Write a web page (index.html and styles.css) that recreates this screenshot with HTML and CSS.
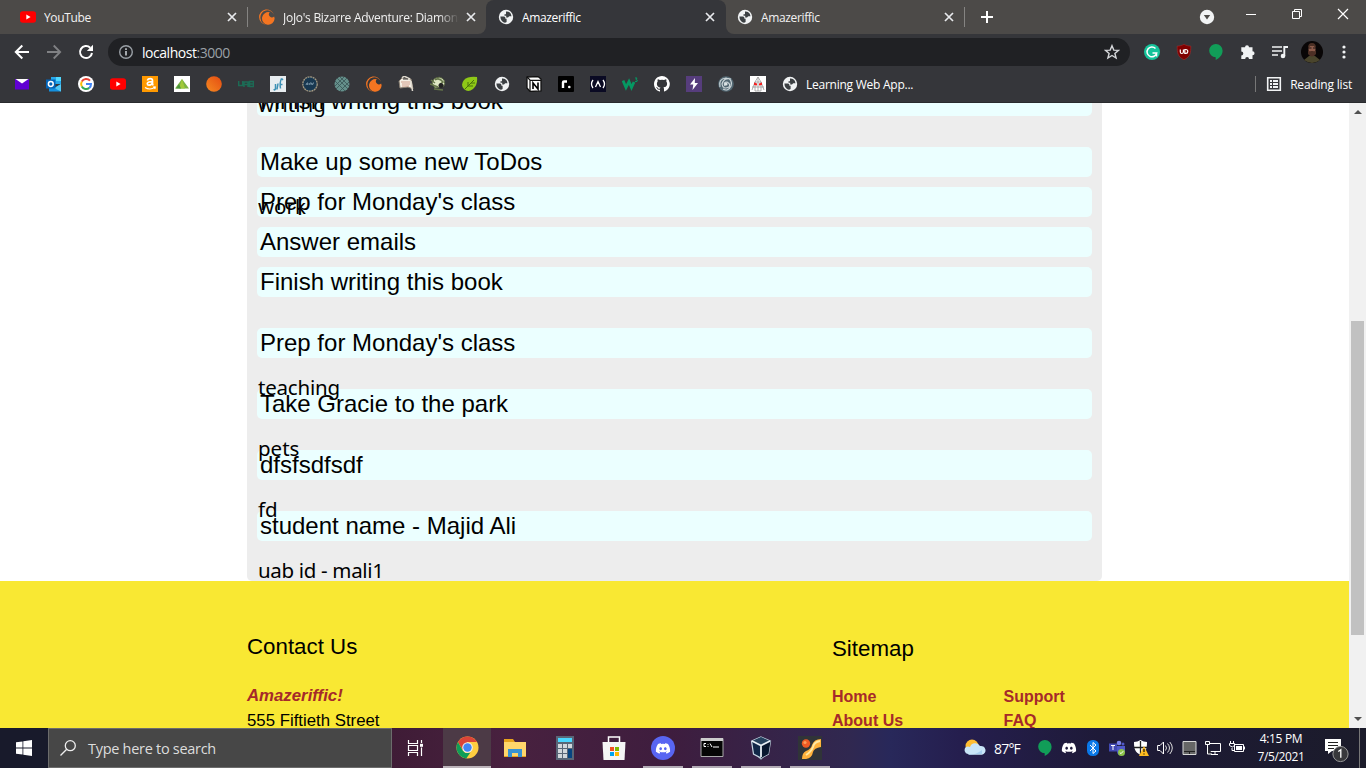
FILE: index.html
```
<!DOCTYPE html>
<html lang="en">
<head>
<meta charset="utf-8">
<title>Amazeriffic</title>
<link rel="stylesheet" href="styles.css">
</head>
<body>
<svg class="defs" width="0" height="0">
  <symbol id="globe" viewBox="0 0 16 16"><circle cx="8" cy="8" r="7.200" fill="#f1f3f4"/><path d="M2.400 7.600H6q1.400 0 1.400 1.500v.7h1.200v3.300q-2.300 1.500-4.700-1.100-1.600-1.800-1.500-4.400zM8 2.500q3-.4 4.800 2.300l.7 2.400h-2.300L10 8.500H8.200V6.700H6.500V5.200H8z" fill="#3c4043"/></symbol>
  <symbol id="close" viewBox="0 0 16 16"><path d="M4 4l8 8M12 4l-8 8" stroke="#e8eaed" stroke-width="1.7"/></symbol>
  <symbol id="youtube" viewBox="0 0 16 16"><rect y="2.300" width="16" height="11.500" rx="2.800" fill="#f00"/><path d="M6.300 5.600v4.900L10.600 8z" fill="#fff"/></symbol>
  <symbol id="crunchy" viewBox="0 0 16 16"><path d="M1.500 9.500A7 7 0 0 1 15 6 7.600 7.600 0 1 0 7 15.600 7 7 0 0 1 1.500 9.500z" fill="#f47521"/><path d="M15.600 9.800A6.300 6.300 0 1 1 10.800 3.300a2.900 2.900 0 1 0 4.300 4.100 6 6 0 0 1 .5 2.400z" fill="#f47521"/></symbol>
  <symbol id="bubble" viewBox="0 0 16 16"><path d="M8 0a6.600 6.600 0 0 0-.3 13.300V16c3.500-1.700 6.900-5 6.900-9.300A6.700 6.700 0 0 0 8 0z" fill="#119d58"/></symbol>
  <symbol id="discord" viewBox="0 0 24 24"><path d="M19.500 5.300A17 17 0 0 0 15.300 4l-.6 1.200a16 16 0 0 0-5.400 0L8.700 4a17 17 0 0 0-4.200 1.300C1.800 9.300 1 13.200 1.400 17a17 17 0 0 0 5.200 2.700l1.200-2-1.900-.9.500-.4c3.600 1.700 7.600 1.700 11.200 0l.5.400-1.900.9 1.200 2a17 17 0 0 0 5.200-2.700c.5-4.400-.8-8.200-3.100-11.700zM8.500 14.500c-1.100 0-2-1-2-2.200s.9-2.200 2-2.200 2 1 2 2.200-.9 2.200-2 2.200zm7 0c-1.100 0-2-1-2-2.200s.9-2.200 2-2.200 2 1 2 2.200-.9 2.200-2 2.200z" fill="#fff"/></symbol>
</svg>
<div class="screen">
<header class="browser">
  <div class="tabs">
    <div class="tab"><svg class="i16"><use href="#youtube"/></svg><span class="tab-title">YouTube</span><svg class="i16"><use href="#close"/></svg></div>
    <div class="tab tab-2"><svg class="i16"><use href="#crunchy"/></svg><span class="tab-title fade">JoJo's Bizarre Adventure: Diamond is</span><svg class="i16"><use href="#close"/></svg></div>
    <div class="tab active"><svg class="i16"><use href="#globe"/></svg><span class="tab-title">Amazeriffic</span><svg class="i16"><use href="#close"/></svg></div>
    <div class="tab tab-4"><svg class="i16"><use href="#globe"/></svg><span class="tab-title">Amazeriffic</span><svg class="i16"><use href="#close"/></svg></div>
    <svg class="plus" viewBox="0 0 16 16"><path d="M8 2v12M2 8h12" stroke="#fff" stroke-width="2"/></svg>
    <div class="window-controls">
      <svg class="i16" viewBox="0 0 16 16"><circle cx="8" cy="8" r="7.200" fill="#f1f3f4"/><path d="M4.800 6h6.400L8 10.500z" fill="#4c4a48"/></svg>
      <svg class="i16 up" viewBox="0 0 16 16"><path d="M3 8.500h10" stroke="#fff"/></svg>
      <svg class="i16 up" viewBox="0 0 16 16"><path d="M3.500 5.500h7v7h-7zM5.500 5V3.500h7v7H11" fill="none" stroke="#fff"/></svg>
      <svg class="i16 up" viewBox="0 0 16 16"><path d="M3 3l10 10M13 3L3 13" stroke="#fff" stroke-width="1.200"/></svg>
    </div>
  </div>
  <div class="toolbar">
    <svg class="nav" viewBox="0 0 16 16"><path d="M15 8H2M8.300 1.500L1.800 8l6.500 6.500" fill="none" stroke="#fff" stroke-width="2"/></svg>
    <svg class="nav" viewBox="0 0 16 16"><path d="M1 8h13M7.700 1.500L14.200 8l-6.500 6.500" fill="none" stroke="#808184" stroke-width="1.800"/></svg>
    <svg class="nav" viewBox="0 0 16 16"><path d="M14 9a6 6 0 1 1-1.800-5.300" fill="none" stroke="#fff" stroke-width="2"/><path d="M15 .7V7H8.800z" fill="#fff"/></svg>
    <div class="omnibox">
      <svg class="i16" viewBox="0 0 16 16"><circle cx="8" cy="8" r="6.300" fill="none" stroke="#9aa0a6" stroke-width="1.400"/><path d="M8 7v4.500M8 4.200v1.700" stroke="#bdc1c6" stroke-width="1.700"/></svg>
      <span class="url">localhost<i>:3000</i></span>
      <svg class="i16 star" viewBox="0 0 16 16"><path d="M8 1.700l1.800 4.400 4.700.3-3.600 3 1.200 4.600L8 11.500 3.900 14l1.200-4.600-3.600-3 4.700-.3z" fill="none" stroke="#d5d7da" stroke-width="1.400"/></svg>
    </div>
    <div class="extensions">
      <svg class="i16" viewBox="0 0 16 16"><circle cx="8" cy="8" r="8" fill="#15c39a"/><path d="M11.500 4.500A4.900 4.900 0 1 0 12.700 9H8.500M12.500 9v3.500" fill="none" stroke="#fff" stroke-width="1.500"/></svg>
      <svg class="i16" viewBox="0 0 16 16"><path d="M8 .3c2 1.200 4.500 1.800 6.800 1.800 0 7-.4 10.500-6.800 13.700C1.600 12.600 1.200 9 1.200 2.100 3.500 2.100 6 1.500 8 .3z" fill="#800000" stroke="#a33" stroke-width=".5"/><path d="M4.300 5.500V8q0 1.500 1.500 1.500T7.400 8V5.500M8.800 5.500v3.900h1q2-.1 2-2t-2-1.900z" fill="none" stroke="#fff" stroke-width="1.200"/></svg>
      <svg class="i16"><use href="#bubble"/></svg>
      <svg class="i16" viewBox="0 0 16 16"><path d="M5 3.300a2 2 0 0 1 4 0h3.500v3.900a2 2 0 0 1 0 4.100V15H9a1.900 1.900 0 0 0-3.800 0H1.300v-3.500a2 2 0 0 0 0-4V3.300z" fill="#f1f3f4"/></svg>
      <svg class="i16" viewBox="0 0 16 16"><path d="M0 3h10M0 7h10M0 11h6" stroke="#f1f3f4" stroke-width="1.600"/><path d="M12.300 12V3H16" fill="none" stroke="#f1f3f4" stroke-width="1.900"/><circle cx="11" cy="12" r="2.300" fill="#f1f3f4"/></svg>
      <svg class="avatar" viewBox="0 0 22 22"><circle cx="11" cy="11" r="11" fill="#090606"/><path d="M3 19l5-4h6l5 4q-8 6-16 0z" fill="#4a452c"/><ellipse cx="11" cy="8.500" rx="3.500" ry="5" fill="#8d5c4b"/><path d="M7 7q0-5 4-5t4 5l-2-2H9z" fill="#4b3025"/><path d="M7 9q1 2 3 1h2q2 1 3-1v4q-4 5-8 0z" fill="#4d2f25"/><path d="M8 7h2.500M12 7h2" stroke="#251715"/></svg>
      <svg class="i16" viewBox="0 0 16 16"><g fill="#f1f3f4"><circle cx="8" cy="3" r="1.600"/><circle cx="8" cy="8" r="1.600"/><circle cx="8" cy="13" r="1.600"/></g></svg>
    </div>
  </div>
  <div class="bookmarks">
    <svg class="i16" viewBox="0 0 16 16"><path d="M1 3h14v10.500H1z" fill="#6001d2"/><path d="M1.500 3h13L8 7.500z" fill="#fff"/></svg>
    <svg class="i16" viewBox="0 0 16 16"><path d="M5 1h10v7H5z" fill="#28a8ea"/><path d="M10 1h5v4h-5z" fill="#50d9ff"/><path d="M3 8l6 4 6-4v7.500H3z" fill="#1490df"/><path d="M15 8v7.500L8 12z" fill="#50c8f5"/><path d="M0 3.500h9.500v9H0z" fill="#0364b8"/><circle cx="4.800" cy="8" r="2.400" fill="none" stroke="#fff" stroke-width="1.500"/></svg>
    <svg class="i16" viewBox="0 0 16 16"><circle cx="8" cy="8" r="8" fill="#fff"/><g fill="none" stroke-width="2"><path d="M12 4.700A5 5 0 0 0 3.800 5.500" stroke="#ea4335"/><path d="M3.800 5.500a5 5 0 0 0 0 5" stroke="#fbbc05"/><path d="M3.800 10.500a5 5 0 0 0 7.500 1.400" stroke="#34a853"/><path d="M11.300 11.900A5 5 0 0 0 13 8H8" stroke="#4285f4"/></g></svg>
    <svg class="i16"><use href="#youtube"/></svg>
    <svg class="i16" viewBox="0 0 16 16"><path d="M0 0h16v16H0z" fill="#f90"/><path d="M5.300 4.500Q6 2.700 8.200 2.700q2.300 0 2.300 2v3q0 1 .9 1.500M10.500 5.600q-5.200 0-5.200 2.100 0 1.500 1.700 1.500 3.500 0 3.500-3.600" fill="none" stroke="#fff" stroke-width="1.700"/><path d="M3 11.500q5 3 10-.2M11.300 10.900l2 .1-.4 2" fill="none" stroke="#fff" stroke-width="1.100"/></svg>
    <svg class="i16" viewBox="0 0 16 16"><path d="M0 0h16v16H0z" fill="#fff"/><path d="M8 3l7 9.500H1z" fill="#7cb342"/><path d="M8 3l3 9.500H5z" fill="#a2c93a"/><path d="M5 8l2 4.500H2z" fill="#4c963c"/></svg>
    <svg class="i16" viewBox="0 0 16 16"><linearGradient id="orange" x1="0" y1="1" x2="1" y2="0"><stop stop-color="#f58a20"/><stop offset="1" stop-color="#e44b12"/></linearGradient><circle cx="8" cy="8" r="7.800" fill="url(#orange)"/></svg>
    <svg class="i16" viewBox="0 0 16 16"><path d="M.7 5v4.500h4V5M6 11V6h4v5M6 8.500h4M11.500 5.500v5h4V8h-4 4V5.500z" fill="none" stroke="#1c6b55" stroke-width="1.500"/></svg>
    <svg class="i16" viewBox="0 0 16 16"><path d="M0 0h16v16H0z" fill="#e8edf0"/><path d="M5.500 8v5q-1 2-1.500 0M8 7.500l-1 6M11.500 2.500q-2 4-1 10M11.500 2.500L13 4M10 8.500h2.500" fill="none" stroke="#3d91b5" stroke-width="1.500"/></svg>
    <svg class="i16" viewBox="0 0 16 16"><circle cx="8" cy="8" r="7.200" fill="#183851" stroke="#a59b84" stroke-width="1.300" stroke-dasharray="2 .6"/><path d="M4 9l1-2h1L5.500 9M7 9l1-2h1.500L9 9M10.500 9l.5-2h1" fill="none" stroke="#7895a8"/></svg>
    <svg class="i16" viewBox="0 0 16 16"><circle cx="8" cy="8" r="7.500" fill="#65908b"/><path d="M1 5l10 10M3 2l11 11M6 1l9 9M1 10L10 1M2 13L13 2M6 15l9-9" stroke="#395456" stroke-width=".8"/></svg>
    <svg class="i16"><use href="#crunchy"/></svg>
    <svg class="i16" viewBox="0 0 16 16"><path d="M1 5l3-3 9 1 2 10-5-2-8 1z" fill="#f4eee4" stroke="#897f72"/><path d="M4 2l2-2 6 3M13 5l1.500 10" fill="none" stroke="#ddd8cd" stroke-width="1.500"/><path d="M3 6h9M4 8h8M4 10h7" stroke="#c88a76" stroke-width=".8"/><path d="M5 3h5" stroke="#333"/></svg>
    <svg class="i16" viewBox="0 0 16 16"><path d="M4 3q6-4 10 1 2 4-1 7l-8 1-3-5z" fill="#dfe8c4" stroke="#56643f"/><path d="M5 4q4-3 8 2l-3 2M0 8l8 3M4 13l9 1M1 4l4 3" fill="none" stroke="#66774a" stroke-width="1.500"/><circle cx="11" cy="9.500" r="2.500" fill="#222"/></svg>
    <svg class="i16" viewBox="0 0 16 16"><path d="M2 4Q6 0 15 1q1 8-4 12-5 4-9 0-4-4 0-9z" fill="#8fc817"/><path d="M3 13L12 4M6 10V6M9 7h4M6 10h5" stroke="#48720a" fill="none"/></svg>
    <svg class="i16"><use href="#globe"/></svg>
    <svg class="i16" viewBox="0 0 16 16"><path d="M1 1l11-.5L15 3v12l-11 .5L1 12z" fill="#fff" stroke="#111" stroke-width="1.300"/><path d="M4 4.300h11M4 4v11M1 1l3 3" stroke="#111" stroke-width="1.200"/><path d="M7 13V7l5 6V6.500" fill="none" stroke="#000" stroke-width="1.600"/></svg>
    <svg class="i16" viewBox="0 0 16 16"><rect width="16" height="16" rx="1" fill="#000"/><path d="M5 12V6.500q0-1 1-1h3" fill="none" stroke="#fff" stroke-width="2.400"/><circle cx="11.300" cy="11" r="1.300" fill="#fff"/></svg>
    <svg class="i16" viewBox="0 0 16 16"><path d="M0 0h16v16H0z" fill="#0a0a23"/><path d="M3 4q-3 4 0 8M13 4q3 4 0 8M5.500 11L8 5.500l2.500 5.500" fill="none" stroke="#fff" stroke-width="1.300"/></svg>
    <svg class="i16" viewBox="0 0 16 16"><path d="M1 4.500l3 7 3-6 2.500 6L12 6" fill="none" stroke="#059862" stroke-width="2.800"/><path d="M13 2h2l-1 1.500q2 0 1 2h-2" fill="none" stroke="#059862"/></svg>
    <svg class="i16" viewBox="0 0 16 16"><path d="M8 0C3.600 0 0 3.600 0 8c0 3.500 2.300 6.500 5.500 7.600.4.100.5-.2.500-.4v-1.500c-2.200.5-2.700-.9-2.700-.9-.4-.9-.9-1.200-.9-1.200-.7-.5.100-.5.100-.5.800.1 1.200.8 1.200.8.700 1.200 1.900.9 2.300.7.100-.5.300-.9.500-1.100-1.800-.2-3.600-.9-3.600-4 0-.9.300-1.600.8-2.100-.1-.2-.4-1 .1-2.100 0 0 .7-.2 2.200.8a7.700 7.700 0 0 1 4 0c1.500-1 2.200-.8 2.200-.8.400 1.100.2 1.900.1 2.100.5.600.8 1.300.8 2.100 0 3.100-1.900 3.700-3.700 3.900.3.300.6.800.6 1.500v2.200c0 .2.100.5.600.4A8 8 0 0 0 8 0z" fill="#fff"/></svg>
    <svg class="i16" viewBox="0 0 16 16"><path d="M0 0h16v16H0z" fill="#563d7c"/><path d="M9 2L4 8.500h3.300L6.500 14l5.500-7H8.800z" fill="#fff"/></svg>
    <svg class="i16" viewBox="0 0 16 16"><circle cx="8" cy="8" r="7.800" fill="#526772"/><path d="M2 11Q0 3 8 2q7 1 5 8-3 6-8 3M13 3q-7-2-9 5 1 6 7 3 2-3-2-5-4 0-2 4" fill="none" stroke="#ccd6d9" stroke-width="1.200"/><circle cx="8" cy="8" r="1.600" fill="#dce3e5"/></svg>
    <svg class="i16" viewBox="0 0 16 16"><path d="M0 0h16v16H0z" fill="#fff"/><path d="M8 1l-3 5-3 8M8 1l3 5 3 8M5 6h6v9H5zM2 11h12M8 1v14" fill="none" stroke="#999" stroke-width=".8"/><path d="M4 6.500l3 1v2L4 9zM12 6.500l-3 1v2l3-.5z" fill="#f32020"/></svg>
    <svg class="i16"><use href="#globe"/></svg>
    <span class="folder">Learning Web App...</span>
    <div class="reading"><svg class="i16" viewBox="0 0 16 16"><path d="M1.700 1.700h12.600v12.600H1.700z" fill="none" stroke="#f1f3f4" stroke-width="1.600"/><path d="M4 5h2M7 5h5M4 8h2M7 8h5M4 11h2M7 11h5" stroke="#f1f3f4" stroke-width="1.800"/></svg><span>Reading list</span></div>
  </div>
</header>
<main class="viewport">
  <div class="page">
    <section class="todos">
      <div class="tag lead">writing</div>
      <p class="todo first">Finish writing this book</p>
      <div class="space"></div>
      <p class="todo">Make up some new ToDos</p>
      <div class="tag short">work</div>
      <p class="todo">Prep for Monday's class</p>
      <p class="todo stacked">Answer emails</p>
      <p class="todo stacked">Finish writing this book</p>
      <div class="space"></div>
      <p class="todo">Prep for Monday's class</p>
      <div class="tag teaching">teaching</div>
      <p class="todo">Take Gracie to the park</p>
      <div class="tag">pets</div>
      <p class="todo">dfsfsdfsdf</p>
      <div class="tag">fd</div>
      <p class="todo">student name - Majid Ali</p>
      <div class="tag last">uab id - mali1</div>
    </section>
    <footer class="footer">
      <section class="contact"><h2>Contact Us</h2><p><em>Amazeriffic!</em></p><p>555 Fiftieth Street</p></section>
      <section class="sitemap"><h2>Sitemap</h2><div class="links"><a>Home</a><a>Support</a><a>About Us</a><a>FAQ</a></div></section>
    </footer>
  </div>
  <div class="scrollbar">
    <svg viewBox="0 0 17 17"><path d="M5 11h8L9 7z" fill="#505050"/></svg>
    <div class="thumb"></div>
    <svg viewBox="0 0 17 17"><path d="M5 6h8l-4 4z" fill="#505050"/></svg>
  </div>
</main>
<footer class="taskbar">
  <div class="start"><svg class="i16" viewBox="0 0 16 16"><path d="M0 2.300L6.500 1.400v6.200H0zM7.300 1.300L16 0v7.600H7.300zM0 8.400h6.500v6.200L0 13.700zM7.300 8.400H16V16l-8.700-1.300z" fill="#fff"/></svg></div>
  <div class="search"><svg class="i16" viewBox="0 0 16 16"><circle cx="10.300" cy="5.700" r="5" fill="none" stroke="#eee" stroke-width="1.300"/><path d="M6.700 9.300L.5 15.500" stroke="#eee" stroke-width="1.300"/></svg><span>Type here to search</span></div>
  <div class="apps">
    <div class="app view"><svg width="18" height="16" viewBox="0 0 18 16"><path d="M1.500 0v3.500h9V0M1.500 16v-3.500h9V16M1.500 5.500h9v5h-9zM14.500 0v3M14.500 7.500V16" fill="none" stroke="#fff" stroke-width="1.200"/><path d="M13 3.800h3v3h-3z" fill="#fff"/></svg></div>
    <div class="app chrome"><svg width="23" height="23" viewBox="0 0 24 24"><circle cx="12" cy="12" r="11.500" fill="#ffcd40"/><path d="M2 6.300A11.500 11.500 0 0 1 22 6.300H12L7.100 14.800z" fill="#db4437"/><path d="M2 6.300l5 8.700q2 3 5 2.800l3-.6-4.300 6.200A11.500 11.500 0 0 1 2 6.300z" fill="#0f9d58"/><circle cx="12" cy="12" r="5.500" fill="#f1f1f1"/><circle cx="12" cy="12" r="4.400" fill="#4285f4"/></svg></div>
    <div class="app files"><svg width="24" height="24" viewBox="0 0 24 24"><path d="M1 3h9l2 3h11v15H1z" fill="#e8a31c"/><path d="M1 6h22v14H1z" fill="#ffd66b"/><path d="M5 13h14v8h-4v-4H9v4H5z" fill="#3893d2"/></svg></div>
    <div class="app calc"><svg width="20" height="24" viewBox="0 0 20 24"><path d="M1 0h18v24H1z" fill="#596677"/><path d="M3 2h14v4H3z" fill="#4bd6ff"/><path d="M3 8h4v4H3zm5 0h4v4H8zm5 0h4v4h-4zM3 13h4v4H3zm5 0h4v4H8zM3 18h4v4H3zm5 0h4v4H8z" fill="#d2d7dc"/><path d="M13 13h4v9h-4z" fill="#064481"/></svg></div>
    <div class="app store"><svg width="24" height="24" viewBox="0 0 24 24"><path d="M6.500 8V1h11v7" fill="none" stroke="#fff" stroke-width="1.500"/><path d="M.5 6h23l-1 18h-21z" fill="#f5f5f5"/><path d="M8 11h4v4H8z" fill="#f25022"/><path d="M13 11h4v4h-4z" fill="#7fba00"/><path d="M8 16h4v4H8z" fill="#00a4ef"/><path d="M13 16h4v4h-4z" fill="#ffb900"/></svg></div>
    <div class="app running disc"><svg width="24" height="24" viewBox="0 0 24 24"><circle cx="12" cy="12" r="12" fill="#5865f2"/><use href="#discord" x="4" y="4.500" width="16" height="16"/></svg></div>
    <div class="app running"><svg width="24" height="24" viewBox="0 0 24 24"><path d="M1 2.500h22v18H1z" fill="#050505" stroke="#aaa"/><path d="M1 2h22v3H1z" fill="#ccc"/><path d="M6 7.500H4v3h2M8 8v.8M8 10v.8M10 7.500l2 3.500M13 11h6" fill="none" stroke="#fff"/></svg></div>
    <div class="app running"><svg width="22" height="24" viewBox="0 0 22 24"><path d="M4 17l7 7 7-7z" fill="#899baa"/><path d="M11 1l9.500 4-2 13-7.500 4-7.500-4-2-13z" fill="#102747" stroke="#c5d5e2" stroke-width="1.200"/><path d="M11 9l9.500-4-2 13-7.500 4z" fill="#08172f"/><path d="M11 1l9 4-9 4-9-4z" fill="#26435f"/><path d="M2 5l9 4.500L20 5M11 9.500V21" fill="none" stroke="#e7eff5" stroke-width="1.800"/></svg></div>
    <div class="app running"><svg width="24" height="24" viewBox="0 0 24 24"><path d="M0 0h24v24H0z" fill="#303438"/><path d="M23 3v8q-7 1-8 5-1 6-7 7H4q0-6 4-8 5-2 6-6 2-6 9-6z" fill="#ffb23c"/><path d="M22 5q-6 1-7 6-2 5-7 8" fill="none" stroke="#ffe9a2" stroke-width="2"/><circle cx="8" cy="7.500" r="4.200" fill="#f05a24"/><circle cx="7" cy="6.500" r="1.600" fill="#ff9b58"/></svg></div>
  </div>
  <div class="tray">
    <svg class="weather" viewBox="0 0 22 18"><circle cx="8" cy="7" r="6.500" fill="#ffbd32"/><path d="M4 15a4 4 0 0 1-2-7q2-1 4 0a5.500 5.500 0 0 1 10-1 4.500 4.500 0 0 1 2 8.800H5z" fill="#c9e5f8"/><path d="M4 15q6 2 14-4v4z" fill="#a7cfef"/></svg>
    <span class="temp">87°F</span>
    <svg class="i16"><use href="#bubble"/></svg>
    <svg class="i16"><use href="#discord"/></svg>
    <svg class="i16" viewBox="0 0 16 16"><rect x="2" width="12" height="16" rx="5.500" fill="#0a78e8"/><path d="M5 5l6 6-3 2.500v-11L11 5l-6 6" fill="none" stroke="#fff"/></svg>
    <svg class="i16" viewBox="0 0 16 16"><circle cx="10" cy="3" r="2.300" fill="#7b83eb"/><circle cx="14" cy="4" r="1.500" fill="#5059c9"/><path d="M8 6h8v5q-1 4-5 4-3 0-3-4z" fill="#5059c9"/><path d="M0 3.500h8v8H0z" fill="#4149b3"/><path d="M2 5.500h4M4 5.500V10" stroke="#fff"/><circle cx="12.500" cy="12.500" r="3.500" fill="#8bc34a"/><path d="M10.800 12.500l1.200 1.200 2.200-2.500" fill="none" stroke="#fff"/></svg>
    <svg class="i16" viewBox="0 0 16 16"><path d="M7.500 0q3 2 6.500 2c0 7-1 10-6.500 13C2 12 1 9 1 2q3.500 0 6.500-2z" fill="#fff"/><path d="M7.500 1v13M1 7.500h13" stroke="#222" stroke-width="1.300"/><path d="M11 6l5 10H6z" fill="#ffbc20"/><path d="M11 9v3M11 13.500v1" stroke="#111" stroke-width="1.200"/></svg>
    <svg class="i16" viewBox="0 0 16 16"><path d="M.6 5.500H3L6.500 2v12L3 10.500H.6z" fill="none" stroke="#fff"/><path d="M8.500 5.500q2 2.500 0 5M10.500 3.500q4 4.500 0 9M12.800 2q5 6 0 12" fill="none" stroke="#ddd"/></svg>
    <svg class="i16" viewBox="0 0 16 16"><path d="M2 1.500h13v13H2z" fill="#666" stroke="#d8d8d8"/><path d="M3 11.500h11M8.500 11.500V14" stroke="#222"/></svg>
    <svg class="i16" viewBox="0 0 16 16"><path d="M4 3.500h11.500v8H4M10 12v2.500M6 14.500h7" fill="none" stroke="#fff"/><path d="M.5 1.500h4v3h-4zM2.500 5v9H7" fill="#292832" stroke="#fff"/></svg>
    <svg class="i16" viewBox="0 0 16 16"><path d="M5.500 4.500h9v7h-9zM15.500 6.500v3M.5 3.500h5v2q-2 3-5 0zM1.500 1v2M4.500 1v2M3 8v2.500h2.500" fill="none" stroke="#fff"/><path d="M7 6h6v4H7z" fill="#fff"/></svg>
    <div class="clock"><span>4:15 PM</span><span>7/5/2021</span></div>
    <svg class="notice" viewBox="0 0 26 26"><path d="M1 1h16v12H8l-4 3v-3H1z" fill="#fff"/><path d="M4 4.500h10M4 7.500h10M4 10.500h6" stroke="#222" stroke-width="1"/><circle cx="16.500" cy="16" r="7.600" fill="#38383c" stroke="#999"/><path d="M14.300 13.500l2.500-1.700v8" fill="none" stroke="#fff" stroke-width="1.300"/></svg>
    <div class="peek"></div>
  </div>
</footer>
</div>
</body>
</html>
```
FILE: styles.css
```
* { box-sizing: border-box; }
body { margin: 0; overflow: hidden; font-family: "Liberation Sans", Arial, sans-serif; }
.defs { display: none; }
.screen { width: 1366px; height: 768px; overflow: hidden; display: flex; flex-direction: column; }
svg { display: block; flex: none; }
.i16 { width: 16px; height: 16px; }
.browser { height: 103px; flex: none; background: #35363a; border-bottom: 1px solid #292a2d; font: 12px "Open Sans", "Noto Sans", sans-serif; color: #fff; white-space: nowrap; }
.tabs { height: 34px; display: flex; align-items: center; background: linear-gradient(#35363a, #35363a) 478px bottom / 256px 10px no-repeat #4c4a48; }
.tab { width: 247px; height: 34px; display: flex; align-items: center; padding: 0 7px 0 20px; color: #f1f1f1; background: #4c4a48; }
.tab-title { flex: 1; margin-left: 8px; overflow: hidden; letter-spacing: -.36px; }
.tab-2 { width: 239px; padding: 0 0 0 12px; background: linear-gradient(#858482, #858482) 0 7px / 1px 20px no-repeat #4c4a48; border-radius: 0 0 8px 0; }
.tab-2 .tab-title { letter-spacing: -.28px; }
.tab-2 .i16:last-child { margin: 0 7px 0 4px; }
.fade { -webkit-mask-image: linear-gradient(90deg, #000 88%, transparent); mask-image: linear-gradient(90deg, #000 88%, transparent); }
.tab.active { width: 240px; padding: 0 8px 0 12px; background: #35363a; border-radius: 8px 8px 0 0; color: #fff; }
.tab-4 { width: 239px; padding: 0 8px 0 11px; border-radius: 0 0 0 8px; background: linear-gradient(#858482, #858482) right 7px / 1px 20px no-repeat #4c4a48; }
.plus { width: 16px; height: 16px; margin-left: 14px; }
.window-controls { display: flex; flex: 1; align-items: center; justify-content: flex-end; padding-right: 15px; gap: 30px; }
.window-controls .i16:first-child { margin-right: -2px; }
.up { margin-top: -6px; }
.toolbar { height: 36px; display: flex; align-items: center; padding-left: 14px; gap: 16px; }
.nav { width: 16px; height: 16px; }
.omnibox { width: 1022px; height: 28px; display: flex; align-items: center; border-radius: 14px; background: #202124; padding: 0 10px; margin-left: -2px; }
.url { flex: 1; margin-left: 8px; font-size: 14px; letter-spacing: -.46px; }
.url i { font-style: normal; color: #9aa0a6; }
.extensions { display: flex; align-items: center; gap: 16px; margin-left: -2px; }
.avatar { width: 22px; height: 22px; margin: 0 -3px; }
.bookmarks { height: 28px; display: flex; align-items: center; gap: 16px; padding: 0 14px; }
.folder { margin-left: -8px; letter-spacing: -.25px; }
.reading { flex: 1; display: flex; align-items: center; justify-content: flex-end; gap: 8px; letter-spacing: -.2px; }
.reading .i16 { box-sizing: content-box; padding-left: 10px; border-left: 1px solid #777; }
.viewport { height: 625px; display: flex; overflow: hidden; background: #fff; }
.page { width: 1349px; overflow: hidden; }
.todos { width: 855px; margin: -28px 0 0 247px; padding: 0 10px; background: #ededed; border-radius: 5px; color: #000; }
.todo { height: 30px; margin: 0; padding-left: 3px; border-radius: 5px; background: #ebffff; font-size: 24px; line-height: 30px; white-space: nowrap; }
.stacked { margin-top: 10px; }
.space { height: 31px; }
.tag { height: 31px; padding-left: 1px; font: 20.5px/58px "Noto Sans", "Open Sans", sans-serif; white-space: nowrap; }
.lead { height: 11px; }
.short { height: 10px; }
.teaching { letter-spacing: -.2px; }
.last { height: 40px; letter-spacing: -.33px; }
.footer { height: 180px; padding: 52px 247px 0; display: grid; grid-template-columns: 585px 270px; background: #f9e833; font-size: 16.800px; line-height: 24.500px; }
.footer h2 { margin: 0 0 23px; font-size: 22.300px; font-weight: 400; line-height: 28px; }
.footer p { margin: 0; }
.footer em, .footer a { font-weight: 700; color: #a52a2a; }
.sitemap { padding-top: 2px; }
.sitemap h2 { margin-bottom: 22px; }
.links { display: grid; grid-template-columns: 171.500px 98px; font-size: 16px; line-height: 24px; }
.scrollbar { width: 17px; display: flex; flex-direction: column; background: #f1f1f1; }
.scrollbar svg { width: 17px; height: 17px; }
.scrollbar svg:last-child { margin-top: auto; }
.thumb { width: 13px; height: 314px; margin: 201px 0 0 2px; background: #c1c1c1; }
.taskbar { height: 40px; display: flex; background: linear-gradient(90deg, #181a2b 0 48px, #3f1c36 391px, #48213f 510px, #3e1d3e 670px, #302850 850px, #28285a 890px, #251e4e 960px, #1e1a38 1100px, #1b1b2a); color: #fff; font-family: "Open Sans", "Noto Sans", sans-serif; }
.start { width: 48px; display: grid; place-items: center; }
.search { width: 344px; border: 1px solid #6c6c6c; background: #474747; display: flex; align-items: center; padding-left: 11px; gap: 12px; font-size: 14.500px; color: #ddd; letter-spacing: -.29px; }
.apps { display: flex; flex: none; width: 444px; }
.app { flex: none; width: 49px; height: 40px; display: grid; place-items: center; padding: 0 2px 1px 0; }
.app.view { width: 51px; padding-right: 3px; }
.app.chrome { width: 48px; padding-right: 0; background: linear-gradient(#bcb4ba, #bcb4ba) bottom / 100% 2px no-repeat #4c3a46; }
.running { background: linear-gradient(#b2abb5, #b2abb5) 4px bottom / 40px 2px no-repeat; }
.app.calc { width: 50px; padding-right: 0; }
.app.store { width: 47px; padding-right: 0; }
.app.disc { width: 51px; background-position: 6px bottom; padding: 0 0 1px 1px; }
.tray { flex: 1; display: flex; align-items: center; gap: 8px; padding-left: 128px; }
.tray .i16 { margin-top: -1px; }
.weather { width: 22px; height: 18px; }
.temp { width: 35px; font-size: 14px; letter-spacing: -.8px; white-space: nowrap; }
.clock { width: 54px; margin-left: 1px; display: flex; flex-direction: column; align-items: center; font-size: 12px; line-height: 18px; letter-spacing: -.35px; white-space: nowrap; }
.notice { width: 26px; height: 26px; margin: 5px 0 0 8px; }
.peek { width: 1px; height: 40px; background: #777; margin-left: 1px; }
```
